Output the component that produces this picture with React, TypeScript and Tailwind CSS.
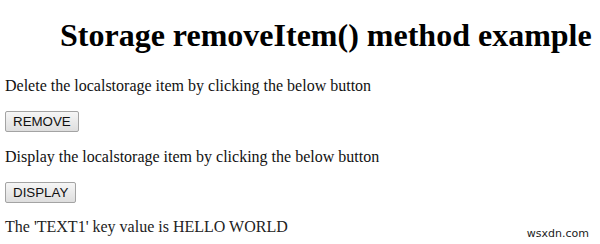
export default function App() {
  return (
    <div className="relative w-[600px] h-[244px] overflow-hidden bg-white pl-[5px] pt-[17px] text-[#111] font-['Liberation_Serif','Times_New_Roman',serif]">
      <h1 className="pl-[55px] text-[32px] font-bold leading-[36px] text-black">Storage removeItem() method example</h1>

      <p className="mt-[24px] text-[16px] leading-[18px]">Delete the localstorage item by clicking the below button</p>
      <div className="mt-[16px] flex">
        <button className="h-[21px] px-[7px] border border-[#a3a3a3] rounded-[2px] bg-gradient-to-b from-[#f6f6f6] to-[#dedede] text-[13.33px] leading-[15px] text-[#111] font-['Liberation_Sans',Arial,sans-serif]">
          REMOVE
        </button>
      </div>

      <p className="mt-[16px] text-[16px] leading-[18px]">Display the localstorage item by clicking the below button</p>
      <div className="mt-[16px] flex">
        <button className="h-[21px] px-[7px] border border-[#a3a3a3] rounded-[2px] bg-gradient-to-b from-[#f6f6f6] to-[#dedede] text-[13.33px] leading-[15px] text-[#111] font-['Liberation_Sans',Arial,sans-serif]">
          DISPLAY
        </button>
      </div>

      <p className="mt-[15px] text-[16px] leading-[18px] text-[#222]">The 'TEXT1' key value is HELLO WORLD</p>

      {/* watermark */}
      <div className="absolute right-[11px] bottom-[4px] text-[11px] leading-[12px] text-[#222] font-['DejaVu_Sans',Verdana,sans-serif]">
        wsxdn.com
      </div>
    </div>
  )
}
